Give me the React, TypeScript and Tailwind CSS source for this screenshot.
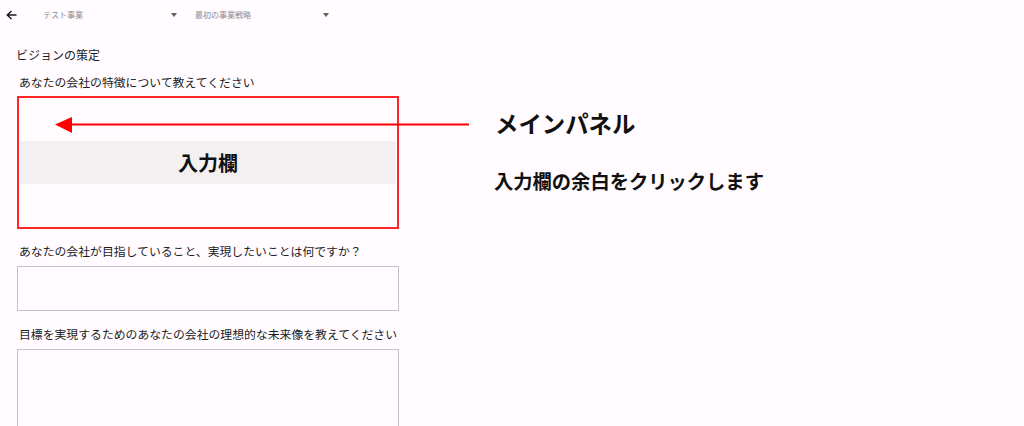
import React from "react";

const font = { fontFamily: '"Noto Sans CJK JP", "Noto Sans", sans-serif' };

function Caret() {
  return (
    <svg width="6" height="4" viewBox="0 0 6 4" className="shrink-0">
      <path d="M0 0 L6 0 L3 4 Z" fill="#5f5f5f" />
    </svg>
  );
}

export default function App() {
  return (
    <div
      className="relative w-[1024px] h-[426px] overflow-hidden bg-[#fffbfe] text-[#1c1b1f]"
      style={font}
    >
      {/* top bar */}
      <div className="flex items-center h-[30px]">
        <div className="w-[43px] pl-[6px] flex items-center">
          <svg width="11" height="10" viewBox="0 0 11 10">
            <path d="M10.5 5 H1.8 M5.5 1 L1.3 5 L5.5 9" stroke="#1c1b1f" strokeWidth="1.5" fill="none" />
          </svg>
        </div>
        <div className="flex items-center justify-between w-[134px] text-[8px] leading-[10px] text-[#8e8a90]">
          <span>テスト事業</span>
          <Caret />
        </div>
        <div className="flex items-center justify-between w-[134px] ml-[18px] text-[8px] leading-[10px] text-[#8e8a90]">
          <span>最初の事業戦略</span>
          <Caret />
        </div>
      </div>

      {/* content */}
      <div className="flex flex-col pl-[16px] pt-[17px] w-[400px]">
        <div className="text-[12px] leading-[16px]">ビジョンの策定</div>
        <div className="mt-[11px] ml-[3px] text-[11.85px] leading-[16px] whitespace-nowrap">
          あなたの会社の特徴について教えてください
        </div>
        <div className="mt-[6px] ml-[1px] w-[382px] h-[133px] border-2 border-[#ff2626] flex flex-col">
          <div className="mt-[43px] mx-[1px] h-[43px] bg-[#f4f0f2] flex items-center justify-center">
            <span className="text-[20px] leading-[24px] font-bold text-[#111]">入力欄</span>
          </div>
        </div>
        <div className="mt-[14px] ml-[3px] text-[11.85px] leading-[16px] whitespace-nowrap">
          あなたの会社が目指していること、実現したいことは何ですか？
        </div>
        <div className="mt-[7px] ml-[1px] w-[382px] h-[45px] border border-[#c6c3c6]" />
        <div className="mt-[15px] ml-[3px] text-[11.85px] leading-[16px] whitespace-nowrap">
          目標を実現するためのあなたの会社の理想的な未来像を教えてください
        </div>
        <div className="mt-[7px] ml-[1px] w-[382px] h-[120px] border border-[#c6c3c6]" />
      </div>

      {/* arrow annotation */}
      <svg
        className="absolute left-[55px] top-[116px]"
        width="416"
        height="18"
        viewBox="0 0 416 18"
      >
        <path d="M0 8.5 L17 1 L17 17 Z" fill="#ff0000" />
        <rect x="16" y="7.5" width="398" height="2" fill="#ff0000" />
      </svg>

      <div className="absolute left-[495px] top-[109px] text-[23.4px] leading-[28px] font-bold text-[#111] whitespace-nowrap">
        メインパネル
      </div>
      <div className="absolute left-[494px] top-[169px] text-[19.3px] leading-[24px] font-bold text-[#111] whitespace-nowrap">
        入力欄の余白をクリックします
      </div>
    </div>
  );
}
